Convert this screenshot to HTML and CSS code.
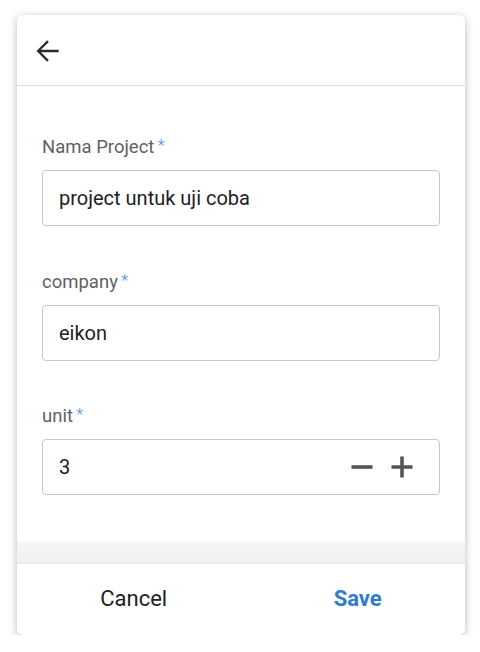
FILE: index.html
```html
<!DOCTYPE html>
<html>
<head>
<meta charset="utf-8">
<link rel="stylesheet" href="styles.css">
</head>
<body>
<div class="card">
  <div class="header">
    <svg class="back" viewBox="0 0 24 24" width="32" height="32"><path d="M20 12H4.6M12 4.6L4.6 12 12 19.4" fill="none" stroke="#2b2b2b" stroke-width="1.7"/></svg>
  </div>
  <div class="content">
    <div class="field">
      <div class="label">Nama Project<span class="req">*</span></div>
      <div class="input">project untuk uji coba</div>
    </div>
    <div class="field">
      <div class="label">company<span class="req">*</span></div>
      <div class="input">eikon</div>
    </div>
    <div class="field">
      <div class="label">unit<span class="req">*</span></div>
      <div class="input number">
        <span class="value">3</span>
        <span class="steps">
          <svg viewBox="0 0 24 24" width="36" height="36"><path d="M19 13.2H5v-2.4h14v2.4z" fill="#555"/></svg>
          <svg viewBox="0 0 24 24" width="36" height="36"><path d="M19 13.2h-5.8V19h-2.4v-5.8H5v-2.4h5.8V5h2.4v5.8H19v2.4z" fill="#555"/></svg>
        </span>
      </div>
    </div>
  </div>
  <div class="band"></div>
  <div class="footer">
    <span class="btn cancel">Cancel</span>
    <span class="btn save">Save</span>
  </div>
</div>
</body>
</html>
```
FILE: styles.css
```css
html, body { margin: 0; padding: 0; background: #fff; }
body { padding: 15px 15px 0 17px; font-family: Roboto, "Noto Sans", sans-serif; }
.card {
  width: 448px; height: 620px; background: #fff; border-radius: 6px;
  box-shadow: 0 2px 8px rgba(0,0,0,0.28);
  display: flex; flex-direction: column; overflow: hidden;
}
.header { height: 71px; border-bottom: 1px solid #dcdcdc; display: flex; align-items: center; padding-left: 15px; box-sizing: border-box; flex: none; }
.back { display: block; margin-top: 1px; }
.content { flex: 1; min-height: 0; padding: 0 25px; display: flex; flex-direction: column; padding-top: 48px; }
.field { margin-bottom: 42.5px; }
.field:last-child { margin-bottom: 0; }
.label { font-size: 18.5px; line-height: 26px; height: 26px; color: #5f6166; margin-bottom: 10px; }
.req { color: #4a8fe0; margin-left: 3px; font-weight: 300; font-size: 17px; line-height: 0; vertical-align: 2px; }
.input { height: 56px; box-sizing: border-box; border: 1px solid #c6c6c6; border-radius: 4px; padding: 0 16px; display: flex; align-items: center; font-size: 20px; color: #202124; }
.number { justify-content: space-between; padding-right: 19px; }
.steps { display: flex; gap: 4px; }
.steps svg { display: block; }
.band { height: 21px; flex: none; background: linear-gradient(#f5f6f7, #eff0f2); border-bottom: 1px solid #e6e7e9; }
.footer { height: 71px; flex: none; display: flex; justify-content: space-around; align-items: center; font-size: 22px; padding-bottom: 3px; box-sizing: border-box; }
.cancel { color: #202124; }
.save { color: #2f7bd0; font-weight: bold; }
```
